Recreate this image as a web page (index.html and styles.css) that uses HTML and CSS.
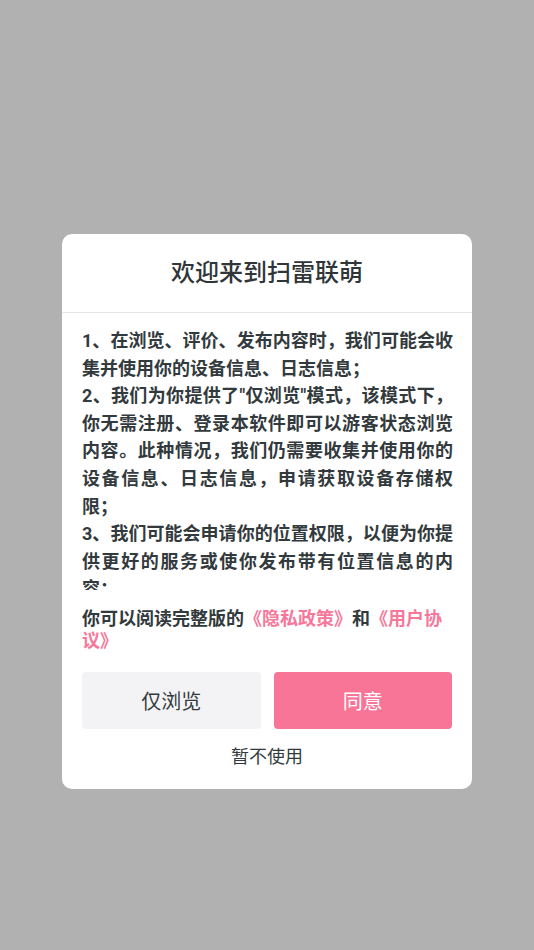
FILE: index.html
```html
<!DOCTYPE html>
<html lang="zh-CN">
<head>
    <meta charset="UTF-8">
    <meta name="viewport" content="width=device-width, initial-scale=1.0">
    <title>欢迎来到扫雷联萌</title>
    <link rel="stylesheet" href="styles.css">
</head>
<body>
    <div class="mask">
        <div class="dialog">
            <div class="title">欢迎来到扫雷联萌</div>
            <div class="terms">
                <p>1、在浏览、评价、发布内容时，我们可能会收集并使用你的设备信息、日志信息；</p>
                <p>2、我们为你提供了"仅浏览"模式，该模式下，你无需注册、登录本软件即可以游客状态浏览内容。此种情况，我们仍需要收集并使用你的设备信息、日志信息，申请获取设备存储权限；</p>
                <p>3、我们可能会申请你的位置权限，以便为你提供更好的服务或使你发布带有位置信息的内容；</p>
            </div>
            <div class="policy">你可以阅读完整版的<a href="#">《隐私政策》</a>和<a href="#">《用户协议》</a></div>
            <div class="btns">
                <button class="browse" type="button">仅浏览</button>
                <button class="agree" type="button">同意</button>
            </div>
            <div class="later">暂不使用</div>
        </div>
    </div>
</body>
</html>
```

FILE: styles.css
```css
*{
    box-sizing: border-box;
    font-family: Roboto, "Noto Sans CJK SC", sans-serif;
}
body{
    margin: 0;
    padding: 0;
}
.mask{
    width: 100%;
    height: 100vh;
    background-color: #b1b1b1;
    display: flex;
    justify-content: center;
    align-items: flex-start;
    padding-top: 234px;
}
.dialog{
    width: 410px;
    background-color: #fff;
    border-radius: 10px;
    display: flex;
    flex-direction: column;
    padding-bottom: 20px;
}
.title{
    height: 79px;
    line-height: 79px;
    text-align: center;
    font-size: 24px;
    font-weight: 500;
    color: #2f3538;
    border-bottom: 1px solid #e4e4e4;
}
.terms{
    height: 277px;
    overflow: hidden;
    padding: 14px 19px 0 20px;
}
.terms p{
    margin: 0;
    font-size: 18px;
    line-height: 27.6px;
    font-weight: bold;
    color: #333a3d;
    text-align: justify;
}
.policy{
    margin-top: 18px;
    padding: 0 20px;
    font-size: 18px;
    line-height: 22px;
    font-weight: bold;
    color: #333a3d;
}
.policy a{
    color: #f7779b;
    text-decoration: none;
}
.btns{
    display: flex;
    gap: 13px;
    padding: 0 20px;
    margin-top: 20px;
}
button{
    flex: 1;
    height: 57px;
    border: unset;
    border-radius: 4px;
    font-size: 20px;
    cursor: pointer;
}
.browse{
    background-color: #f3f3f5;
    color: #333a3d;
}
.agree{
    background-color: #f87597;
    color: #fff;
}
.later{
    margin-top: 16px;
    text-align: center;
    font-size: 18px;
    line-height: 24px;
    color: #333a3d;
}
```
